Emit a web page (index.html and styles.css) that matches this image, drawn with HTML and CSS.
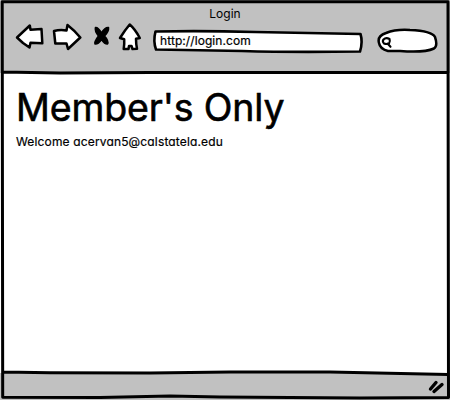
FILE: index.html
```html
<!DOCTYPE html>
<html lang="en">
<head>
<meta charset="utf-8">
<title>Login</title>
<link rel="stylesheet" href="styles.css">
</head>
<body>
<div class="window">
  <header class="chrome">
    <div class="title">Login</div>
    <div class="toolbar">
      <svg class="icon back" viewBox="15 22 30 28"><path d="M17 37.500 29.800 25.500 30.500 29.800 41.500 29 42.300 43.200 30.500 42.800 29.500 47.500 23 43Z"/></svg>
      <svg class="icon forward" viewBox="52 22 30 30"><path d="M54 31 Q60 29.500 66.500 30.500L67.500 25Q74 30 80.300 37.500L68 49 66.500 43.500 55.300 43.500Z"/></svg>
      <svg class="icon stop" viewBox="92 24 20 24"><path class="solid" d="M95.500 27.500Q98 27 101.500 33Q105 27 108.500 27.500Q109 31 104.500 36Q109 41 107.500 44Q105 44.500 101.500 39.500Q98 44.500 95 44Q94 42 98.500 36Q94.500 31 95.500 27.500Z"/></svg>
      <svg class="icon home" viewBox="117 22 26 29"><path d="M129.700 24.500Q135 29 139.800 38L136 38.800Q136 44 137 48.800L132.500 49 131.500 46 129 46 128.500 49 123.700 49Q124.500 44 124.200 39.300L120 38Q125 30 129.700 24.500Z"/></svg>
      <div class="address">
        <svg class="shape" viewBox="0 0 212 24"><path d="M3.500 2.500Q50 1.500 103 3L208.500 5Q211 13 208 22.500Q140 23.500 90 22L4 20.500Q1 12 3.500 2.500Z"/></svg>
        <span class="url">http://login.com</span>
      </div>
      <svg class="icon search" viewBox="376 27 62 27"><path d="M379 43Q377 36 386 33Q396 29 410 30Q432 31 435 37Q438 46 434 48.500Q424 53 400 51L388 51Q380 49 379 43Z"/><path class="lens" d="M383.500 39.500Q386 37 389.500 39Q390.500 41.500 389 43.500Q386.500 44.500 384 43.500Q382 41.500 383.500 39.500ZM387.500 43.500 390.500 46.800"/></svg>
    </div>
  </header>
  <main class="page">
    <h1>Member's Only</h1>
    <p>Welcome acervan5@calstatela.edu</p>
  </main>
  <footer class="status">
    <svg class="grip" viewBox="427 379 18 16"><path d="M430.500 389 436 382.500M434 391.500 442 384.500"/></svg>
  </footer>
  <svg class="frame" viewBox="0 0 450 400"><path d="M2.200 1.700H448L448.500 397.500 360 398 220 397 170 396 100 397.500 2.700 397.300ZM2.500 72 60 73 150 72.500H448M3 372 50 372.800 150 373 230 372 330 372 448 374.500"/></svg>
</div>
</body>
</html>
```
FILE: styles.css
```css
body {
  margin: 0;
  background: #fff;
  color: #000;
  font-family: Inter, "Liberation Sans", sans-serif;
  font-feature-settings: "cv11";
}

.window {
  position: relative;
  display: grid;
  grid-template-rows: 73px 1fr 27px;
  width: 450px;
  height: 400px;
  overflow: hidden;
}

.frame {
  position: absolute;
  inset: 0;
  fill: none;
  stroke: #000;
  stroke-width: 3;
  stroke-linejoin: round;
  pointer-events: none;
}

.chrome, .status {
  background: #c1c1c1;
}

.title {
  padding-top: 6px;
  height: 16px;
  line-height: 16px;
  text-align: center;
  font-size: 12px;
}

.toolbar {
  display: flex;
  align-items: flex-start;
  padding-left: 15px;
}

.icon {
  flex: none;
  fill: #fff;
  stroke: #000;
  stroke-width: 2.5;
  stroke-linejoin: round;
  stroke-linecap: round;
}

.back { width: 30px; height: 28px; }
.forward { width: 30px; height: 30px; margin-left: 7px; }
.stop { width: 20px; height: 24px; margin: 2px 0 0 10px; }
.home { width: 26px; height: 29px; margin-left: 5px; }
.search { width: 62px; height: 27px; margin: 5px 0 0 12px; }
.stop .solid { fill: #000; stroke-width: 1.6; }
.search .lens { fill: none; stroke-width: 2.1; }

.address {
  position: relative;
  width: 212px;
  height: 24px;
  margin: 7px 0 0 9px;
}

.shape {
  position: absolute;
  inset: 0;
  fill: #fff;
  stroke: #000;
  stroke-width: 2.6;
  stroke-linejoin: round;
  overflow: visible;
}

.url {
  position: relative;
  display: block;
  padding-left: 8px;
  font-size: 12px;
  line-height: 24px;
  letter-spacing: 0.08px;
  -webkit-text-stroke: 0.2px #000;
}

.page {
  padding: 13px 16px 12px;
}

h1 {
  margin: 0;
  font-size: 37.5px;
  line-height: 44px;
  font-weight: 400;
  letter-spacing: -0.15px;
  -webkit-text-stroke: 0.6px #000;
  white-space: nowrap;
}

p {
  margin: 3px 0 0;
  font-size: 12px;
  line-height: 18px;
  letter-spacing: 0.15px;
  -webkit-text-stroke: 0.2px #000;
  white-space: nowrap;
}

.status {
  display: flex;
  justify-content: flex-end;
  align-items: flex-start;
}

.grip {
  width: 18px;
  height: 16px;
  margin: 6px 5px 0 0;
  stroke: #000;
  stroke-width: 3.4;
  stroke-linecap: round;
}
```
